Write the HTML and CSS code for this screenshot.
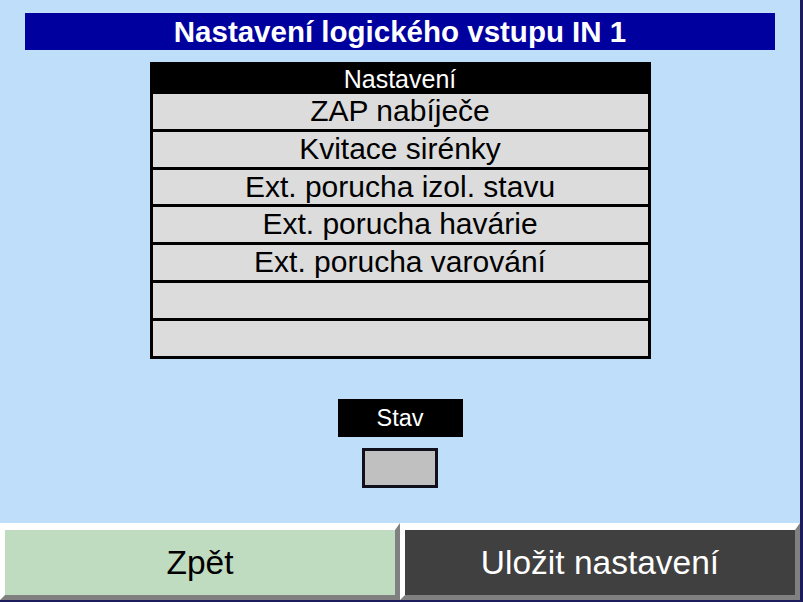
FILE: index.html
```html
<!DOCTYPE html>
<html lang="cs">
<head>
<meta charset="utf-8">
<title>Nastavení logického vstupu IN 1</title>
<link rel="stylesheet" href="styles.css">
</head>
<body>
<div class="screen">
  <div class="title">Nastavení logického vstupu IN 1</div>
  <div class="list">
    <div class="list-head">Nastavení</div>
    <div class="row">ZAP nabíječe</div>
    <div class="row">Kvitace sirénky</div>
    <div class="row">Ext. porucha izol. stavu</div>
    <div class="row">Ext. porucha havárie</div>
    <div class="row">Ext. porucha varování</div>
    <div class="row"></div>
    <div class="row"></div>
  </div>
  <div class="state-label">Stav</div>
  <div class="state-box"></div>
  <div class="buttons">
    <div class="btn btn-back">Zpět</div>
    <div class="btn btn-save">Uložit nastavení</div>
  </div>
</div>
</body>
</html>
```

FILE: styles.css
```css
html, body {
  margin: 0;
  padding: 0;
  background: #bfdefa;
}

.screen {
  width: 800px;
  height: 600px;
  border-right: 3px solid #1c1c5c;
  border-bottom: 2px solid #1c1c5c;
  background: #bfdefa;
  display: flex;
  flex-direction: column;
  align-items: center;
  font-family: "Liberation Sans", Arial, sans-serif;
}

.title {
  margin-top: 13px;
  width: 750px;
  height: 37px;
  background: #00009e;
  color: #fff;
  font-weight: bold;
  font-size: 29.5px;
  line-height: 37px;
  text-align: center;
}

.list {
  margin-top: 12px;
  width: 495px;
  background: #000;
  border: 3px solid #000;
  display: grid;
  grid-template-rows: 26px repeat(7, 34.8px);
  row-gap: 3px;
}

.list-head {
  color: #fff;
  font-size: 25px;
  line-height: 28px;
  text-align: center;
}

.row {
  background: #dcdcdc;
  color: #000;
  font-size: 30px;
  line-height: 34px;
  text-align: center;
}

.state-label {
  margin-top: 40px;
  width: 125px;
  height: 38px;
  background: #000;
  color: #fff;
  font-size: 23.5px;
  line-height: 38px;
  text-align: center;
}

.state-box {
  margin-top: 11px;
  width: 70px;
  height: 34px;
  background: #c0c0c0;
  border: 3px solid #10101c;
}

.buttons {
  margin-top: auto;
  width: 800px;
  height: 77px;
  background: #fff;
  display: flex;
}

.btn {
  flex: 1;
  border-top: 7px solid #fff;
  border-left: 5px solid #fff;
  border-right: 5px solid #808080;
  border-bottom: 5px solid #808080;
  font-size: 33.5px;
  line-height: 65px;
  text-align: center;
}

.btn-back {
  background: #c0dcc0;
  color: #000;
}

.btn-save {
  background: #404040;
  color: #fff;
}
```
